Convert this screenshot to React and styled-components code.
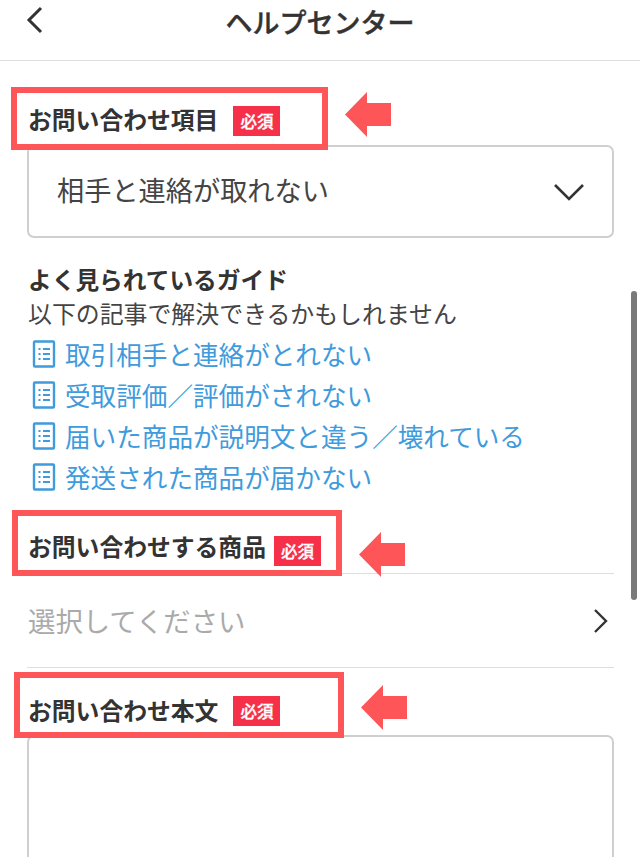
import React from 'react';
import styled, { createGlobalStyle } from 'styled-components';

const GlobalStyle = createGlobalStyle`
  html, body {
    margin: 0;
    padding: 0;
    background: #fff;
  }
  body {
    font-family: 'Noto Sans CJK JP', 'Noto Sans', sans-serif;
    color: #333;
  }
  * {
    box-sizing: border-box;
  }
`;

const Page = styled.div`
  position: relative;
  width: 640px;
  height: 857px;
  overflow: hidden;
  background: #fff;
`;

const Header = styled.header`
  position: relative;
  display: flex;
  align-items: center;
  justify-content: center;
  height: 61px;
  padding-bottom: 16px;
  border-bottom: 1px solid #dedede;
`;

const BackButton = styled.svg`
  position: absolute;
  left: 24px;
  top: 6px;
  width: 20px;
  height: 28px;
  fill: none;
  stroke: #333;
  stroke-width: 3;
`;

const Title = styled.h1`
  margin: 0;
  font-size: 27px;
  line-height: 44px;
  font-weight: 500;
  color: #333;
  -webkit-text-stroke: 0.4px #333;
`;

const Main = styled.main`
  padding: 0 26px 0 27px;
`;

const Heading = styled.div`
  position: relative;
  display: flex;
  align-items: center;
  height: 30px;
  margin-top: ${(p) => p.$top}px;
  margin-bottom: ${(p) => p.$bottom}px;
`;

const HeadingText = styled.h2`
  margin: -2px 0 0 1px;
  font-size: 23.8px;
  line-height: 30px;
  font-weight: 700;
  color: #333;
  white-space: nowrap;
`;

const Badge = styled.span`
  display: flex;
  align-items: center;
  justify-content: center;
  width: 47px;
  height: 30px;
  margin-left: ${(p) => p.$gap}px;
  margin-top: ${(p) => p.$drop}px;
  flex: none;
  background: #f7304a;
  color: #fff;
  font-size: 16.5px;
  font-weight: 500;
  -webkit-text-stroke: 0.3px #fff;
`;

const Highlight = styled.div`
  position: absolute;
  left: ${(p) => p.$left}px;
  top: ${(p) => p.$top}px;
  width: ${(p) => p.$width}px;
  height: ${(p) => p.$height}px;
  border: 6px solid #fe5658;
  pointer-events: none;
`;

const Arrow = styled.svg`
  position: absolute;
  left: ${(p) => p.$left}px;
  top: ${(p) => p.$top}px;
  width: 46px;
  height: 45px;
  fill: #fe5658;
`;

const SelectBox = styled.div`
  display: flex;
  align-items: center;
  justify-content: space-between;
  height: 93px;
  padding: 0 27px 0 28px;
  border: 2px solid #cfcfcf;
  border-radius: 7px;
  font-size: 27.2px;
  color: #444;
`;

const SelectValue = styled.span`
  margin-top: -6px;
`;

const ChevronDown = styled.svg`
  width: 32px;
  height: 20px;
  fill: none;
  stroke: #333;
  stroke-width: 2.6;
`;

const Guide = styled.section`
  margin: 24px 0 0 1px;
`;

const GuideTitle = styled.h3`
  margin: 0;
  font-size: 23.7px;
  line-height: 34px;
  font-weight: 700;
  color: #333;
`;

const GuideText = styled.p`
  margin: 0;
  font-size: 23.9px;
  line-height: 34px;
  color: #444;
`;

const GuideList = styled.ul`
  list-style: none;
  margin: 3px 0 0;
  padding: 0;
`;

const GuideItem = styled.li`
  display: flex;
  align-items: center;
  gap: 9px;
  height: 41px;
  padding-left: 4px;
  font-size: 25.6px;
  color: #3f9bdc;
`;

const DocIcon = styled.svg`
  flex: none;
  width: 24px;
  height: 28px;
  fill: none;
  stroke: #3f9bdc;
  stroke-width: 2;
`;

const ProductRow = styled.div`
  display: flex;
  align-items: center;
  justify-content: space-between;
  height: 95px;
  padding-right: 5px;
  border-top: 1px solid #dedede;
  border-bottom: 1px solid #dedede;
`;

const Placeholder = styled.span`
  margin: -2px 0 0 1px;
  font-size: 27.4px;
  color: #aaa;
`;

const ChevronRight = styled.svg`
  width: 16px;
  height: 26px;
  fill: none;
  stroke: #333;
  stroke-width: 2.4;
`;

const TextArea = styled.div`
  height: 180px;
  border: 2px solid #cfcfcf;
  border-radius: 7px;
`;

const Scrollbar = styled.div`
  position: absolute;
  left: 631px;
  top: 291px;
  width: 6px;
  height: 309px;
  border-radius: 3px;
  background: #7a7a7a;
`;

const guides = [
  '取引相手と連絡がとれない',
  '受取評価／評価がされない',
  '届いた商品が説明文と違う／壊れている',
  '発送された商品が届かない',
];

const Doc = () => (
  <DocIcon viewBox="0 0 24 28">
    <rect x="2" y="1.5" width="20" height="25" rx="1" strokeWidth="2.4" />
    <path d="M6.5 9h2M11 9h7M6.5 14h2M11 14h7M6.5 19h2M11 19h7" />
  </DocIcon>
);

const LeftArrow = ({ left, top }) => (
  <Arrow viewBox="0 0 46 45" $left={left} $top={top}>
    <path d="M0 22.5 L22 0 V11 H46 V34 H22 V45 Z" />
  </Arrow>
);

const Required = ({ gap, drop = 0 }) => (
  <Badge $gap={gap} $drop={drop}>必須</Badge>
);

export default function App() {
  return (
    <Page>
      <GlobalStyle />
      <Header>
        <BackButton viewBox="0 0 20 28">
          <path d="M17 2 L5 14 L17 26" />
        </BackButton>
        <Title>ヘルプセンター</Title>
      </Header>
      <Main>
        <Heading $top={44} $bottom={10}>
          <HeadingText>お問い合わせ項目</HeadingText>
          <Required gap={15} drop={1} />
          <Highlight $left={-16} $top={-18} $width={317} $height={63} />
          <LeftArrow left={318} top={-13} />
        </Heading>
        <SelectBox>
          <SelectValue>相手と連絡が取れない</SelectValue>
          <ChevronDown viewBox="0 0 32 20">
            <path d="M2 3 L16 17 L30 3" />
          </ChevronDown>
        </SelectBox>
        <Guide>
          <GuideTitle>よく見られているガイド</GuideTitle>
          <GuideText>以下の記事で解決できるかもしれません</GuideText>
          <GuideList>
            {guides.map((g) => (
              <GuideItem key={g}>
                <Doc />
                {g}
              </GuideItem>
            ))}
          </GuideList>
        </Guide>
        <Heading $top={35} $bottom={11}>
          <HeadingText>お問い合わせする商品</HeadingText>
          <Required gap={8} drop={7} />
          <Highlight $left={-15} $top={-22} $width={330} $height={66} />
          <LeftArrow left={332} top={0} />
        </Heading>
        <ProductRow>
          <Placeholder>選択してください</Placeholder>
          <ChevronRight viewBox="0 0 16 26">
            <path d="M2 2 L13 13 L2 24" />
          </ChevronRight>
        </ProductRow>
        <Heading $top={28} $bottom={9}>
          <HeadingText>お問い合わせ本文</HeadingText>
          <Required gap={15} />
          <Highlight $left={-13} $top={-24} $width={330} $height={66} />
          <LeftArrow left={334} top={-11} />
        </Heading>
        <TextArea />
      </Main>
      <Scrollbar />
    </Page>
  );
}
